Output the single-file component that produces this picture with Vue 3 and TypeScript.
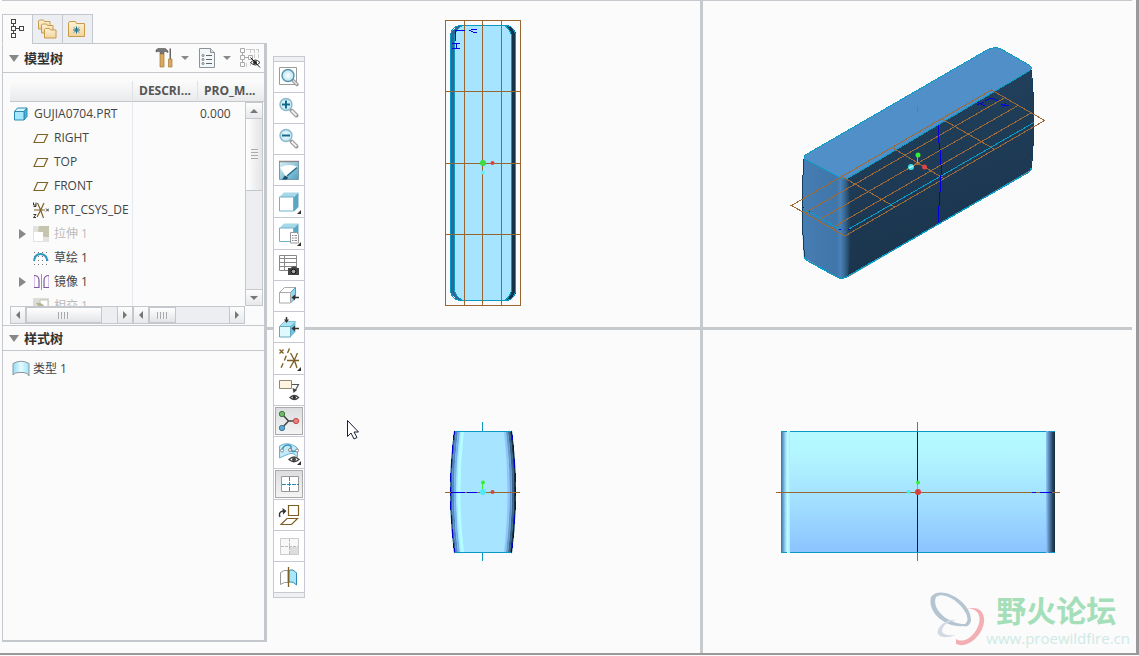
<script setup lang="ts">
interface TreeRow {
  name: string
  icon: 'part' | 'plane' | 'csys' | 'extrude' | 'sketch' | 'mirror' | 'intersect'
  root?: boolean
  expandable?: boolean
  muted?: boolean
  value?: string
}

const rows: TreeRow[] = [
  { name: 'GUJIA0704.PRT', icon: 'part', root: true, value: '0.000' },
  { name: 'RIGHT', icon: 'plane' },
  { name: 'TOP', icon: 'plane' },
  { name: 'FRONT', icon: 'plane' },
  { name: 'PRT_CSYS_DE', icon: 'csys' },
  { name: '拉伸 1', icon: 'extrude', expandable: true, muted: true },
  { name: '草绘 1', icon: 'sketch' },
  { name: '镜像 1', icon: 'mirror', expandable: true },
  { name: '相交 1', icon: 'intersect', muted: true },
]
</script>

<template>
  <div class="app">
    <aside class="side">
      <nav class="tabs">
        <button class="tab on" aria-label="模型树">
          <svg width="20" height="22" viewBox="0 0 20 22" class="crisp"><path d="M3.500 1.500h4v4h-4zM3.500 8.500h4v4h-4zM3.500 15.500h4v4h-4zM11.500 8.500h4v4h-4zM5.500 5.500v3M5.500 12.500v3M7.500 10.500h4" fill="none" stroke="#444" /></svg>
        </button>
        <button class="tab" aria-label="文件夹浏览器">
          <svg width="22" height="22" viewBox="0 0 22 22">
            <g fill="url(#fold)" stroke="#c79a4c">
              <path d="M1.500 11V3l1-1h4l1 1.500h5.500V11z" />
              <path d="M4.500 15V7l1-1h4l1 1.500h5.500V15z" />
              <path d="M7.500 20v-8.500l1-1h4l1 1.500h5.500V20z" />
            </g>
          </svg>
        </button>
        <button class="tab" aria-label="收藏夹">
          <svg width="22" height="22" viewBox="0 0 22 22">
            <path d="M1.500 18.500V5l1-1.500h6l1 2h8v13z" fill="url(#fold)" stroke="#c79a4c" />
            <path d="M9.500 8.500v7M6 12h7M7 9.500l5 5M12 9.500l-5 5" stroke="#1b6d92" />
          </svg>
        </button>
      </nav>

      <div class="panel">
        <header class="head">
          <i class="caret"></i>
          <h2>模型树</h2>
          <div class="tools">
            <button class="tool" aria-label="设置">
              <svg width="20" height="22" viewBox="0 0 20 22">
                <path d="M1 5V3l2-1.500h7.500L13 4v1.500l-2.500-1H9V7H5V4.500H3z" fill="#777" stroke="#555" stroke-width=".6" />
                <path d="M5 7h4v13H5z" fill="#d9a962" stroke="#a87832" stroke-width=".7" />
                <path d="M14.500 1.500h1.500V12h-1.500z" fill="#666" />
                <path d="M13.500 12h3.500v8h-3.500z" fill="#d9a962" stroke="#a87832" stroke-width=".7" />
              </svg>
              <i class="drop"></i>
            </button>
            <button class="tool" aria-label="显示">
              <svg width="20" height="22" viewBox="0 0 20 22">
                <path d="M2.500 1.500h11l4 4v15h-15z" fill="#f2f7fa" stroke="#8b9299" />
                <path d="M13.500 1.500v4h4" fill="#ddd" stroke="#8b9299" />
                <path d="M9 8.500h6M9 12.500h6M9 16.500h6" stroke="#666" />
                <g fill="none" stroke="#777"><circle cx="6" cy="8.500" r="1" /><circle cx="6" cy="12.500" r="1" /><circle cx="6" cy="16.500" r="1" /></g>
              </svg>
              <i class="drop"></i>
            </button>
            <button class="tool" aria-label="层显示">
              <svg width="22" height="22" viewBox="0 0 22 22">
                <path d="M1.500 1.500h4v4h-4zM1.500 8.500h4v4h-4zM1.500 15.500h4v4h-4zM9.500 8.500h4v4h-4zM3.500 5.500v3M3.500 12.500v3M5.500 10.500h4" fill="none" stroke="#aaa" />
                <path d="M7 2.500h12M11.500 2v5M15.500 2v10M19.500 2v10M7.500 16v4M11.500 15v5" fill="none" stroke="#ccc" stroke-dasharray="4 1" />
                <path d="M11.500 15.500q5-5 9.500 0q-4.500 5-9.500 0z" fill="#fff" stroke="#333" />
                <circle cx="16" cy="15.500" r="2" fill="#333" />
                <path d="M11.500 10.500l9.500 10" stroke="#111" />
              </svg>
            </button>
          </div>
        </header>

        <div class="tree">
          <div class="clip">
            <table>
              <colgroup><col class="c1" /><col class="c2" /><col /></colgroup>
              <thead>
                <tr><th></th><th>DESCRI...</th><th>PRO_M...</th></tr>
              </thead>
              <tbody>
                <tr v-for="row in rows" :key="row.name">
                  <td>
                    <div class="item" :class="{ root: row.root, muted: row.muted }">
                      <button v-if="row.expandable" class="twist" :aria-label="'展开 ' + row.name"></button>
                      <span v-else-if="!row.root" class="twist-gap"></span>
                      <svg width="16" height="16" viewBox="0 0 16 16">
                        <template v-if="row.icon === 'part'">
                          <path d="M1.500 5.500l3-3.500h9.500l-3 3.500z" fill="#d9f6fd" stroke="#2b8bb4" />
                          <path d="M11 5.500L14 2v8.500L11 14z" fill="#4cb4dd" stroke="#2b8bb4" />
                          <path d="M1.500 5.500H11V14H1.500z" fill="#a6e7fb" stroke="#2b8bb4" />
                        </template>
                        <path v-else-if="row.icon === 'plane'" d="M1 12.500L4.500 4.500H14.500L11 12.500z" fill="none" stroke="#7d6227" stroke-width="1.200" />
                        <template v-else-if="row.icon === 'csys'">
                          <path d="M1 8h11M4.500 1q3 6 6 15M11 1q-3.500 8-7 14" fill="none" stroke="#7d6227" stroke-width="1.200" />
                          <path d="M.5.500v2.500h2.500V.5M3 3v1.500H.5M.5 12.500h2.500l-2.500 3h2.500M13 6.500l3 3M16 6.500l-3 3" fill="none" stroke="#333" />
                        </template>
                        <template v-else-if="row.icon === 'extrude'">
                          <path d="M0 0h16v16H0z" fill="#e2e2df" />
                          <path d="M6 0h10v11h-5L5 5z" fill="#c6c4ae" />
                          <path d="M1 6h9v9H1z" fill="#fff" />
                        </template>
                        <template v-else-if="row.icon === 'sketch'">
                          <path d="M1 2.500h14M1 6.500h14M1 10.500h14M1 14.500h14" stroke="#777" stroke-dasharray="1 3" />
                          <path d="M1 11q1-7 6.500-7T14.500 11" fill="none" stroke="#2f97be" stroke-width="2" />
                        </template>
                        <template v-else-if="row.icon === 'mirror'">
                          <path d="M1.500 2v12M15.500 2v12" stroke="#d4c4e6" />
                          <path d="M1 1.500q5 0 5 5v7H1M16 1.500q-5 0-5 5v7h5" fill="none" stroke="#81599f" stroke-width="1.200" />
                          <path d="M8.500 0v16" stroke="#999" />
                        </template>
                        <template v-else>
                          <path d="M0 0h16v16H0z" fill="#dcdcd8" />
                          <path d="M7 2h8v12H7z" fill="#fff" stroke="#c6c4ae" />
                          <path d="M3 5q7-1 9 5H7z" fill="#b8b596" />
                        </template>
                      </svg>
                      <span>{{ row.name }}</span>
                    </div>
                  </td>
                  <td></td>
                  <td class="val">{{ row.value }}</td>
                </tr>
              </tbody>
            </table>
          </div>
          <div class="vbar">
            <button class="sb up" aria-label="向上滚动"></button>
            <div class="vthumb"><i></i></div>
            <button class="sb down" aria-label="向下滚动"></button>
          </div>
          <div class="hbars">
            <div class="hbar first">
              <button class="sb left" aria-label="名称列向左"></button>
              <div class="hthumb long"><i></i></div>
              <button class="sb right" aria-label="名称列向右"></button>
            </div>
            <div class="hbar">
              <button class="sb left" aria-label="数据列向左"></button>
              <div class="hthumb"><i></i></div>
              <button class="sb right" aria-label="数据列向右"></button>
            </div>
          </div>
        </div>

        <header class="head second">
          <i class="caret"></i>
          <h2>样式树</h2>
        </header>
        <div class="style-item">
          <svg width="18" height="18" viewBox="0 0 18 18">
            <path d="M1 3.500q8-4.500 16 0V16q-1-3-5-3.500H6Q3 12.500 1 15z" fill="url(#sheet)" stroke="#8f979d" />
          </svg>
          <span>类型 1</span>
        </div>
      </div>
    </aside>

    <main class="views">
      <svg viewBox="267 1 433 326" class="pane">
        <g class="crisp">
          <rect x="451" y="26" width="65" height="274" rx="10" fill="#2f6797" />
          <path d="M483 26h23q10 0 10 10v254q0 10-10 10h-23z" fill="#143349" />
          <path d="M454.500 38q0-8 8-12.500h42q7 4.500 7 12.500v250q0 8-7 12.500h-42q-8-4.500-8-12.500z" fill="#a6e4ff" stroke="#0a98c4" />
          <rect x="450.500" y="25.500" width="65" height="275" rx="10" fill="none" stroke="#0a98c4" />
          <path d="M445.500 20.500h75v285h-75zM464.500 20v285M482.500 20v285M501.500 20v285M445 91.500h75M445 163.500h75M445 234.500h75" fill="none" stroke="#996632" />
          <path d="M455.500 41V30.500h9M452 43.500h8M452 48.500h8M456.500 43v5M469 30.500h2M471 29.500h6M471 31.500h2M473 32.500h4" fill="none" stroke="#0000e0" />
        </g>
        <circle cx="483" cy="163" r="3" fill="#3bdc3b" /><circle cx="492.500" cy="163" r="2" fill="#de4040" /><circle cx="483" cy="172.500" r="2" fill="#5ff2f8" />
      </svg>

      <svg viewBox="703 1 429 326" class="pane">
        <path d="M847 177L1031 68Q1037 120 1031 170L848 277z" fill="url(#dark)" />
        <path d="M804 157Q800 208 804 258L837 277Q843 280 848 276Q854 225 848 176z" fill="url(#endcap)" />
        <path d="M804 157Q804 155 807 154L987 50Q995 46 1001 49L1029 65Q1034 68 1029 71L850 177Q845 180 839 177L806 160Q804 159 804 157z" fill="#518fc8" />
        <g fill="none" stroke="#0a9dc6" class="crisp">
          <path d="M804 157Q804 155 807 154L987 50Q995 46 1001 49L1029 65Q1034 68 1029 71L850 177Q845 180 839 177L806 160Q804 159 804 157z" />
          <path d="M804.500 256Q804 259 808 261L837 277Q843 280 848 276L1029 172Q1032 170 1031 168" stroke-width="1.300" />
        </g>
        <path d="M804 159Q800 208 804.500 257M1031.500 70Q1036 120 1031.500 168" fill="none" stroke="#153b5a" class="crisp" />
        <g fill="none" class="crisp">
          <path d="M791.500 205.500L991.500 90L1044.500 120.500L845 236zM805 213L1005 97.500M818 220.500L1018 105.500M832 228L1031 113M842 176.500L895 207M892 147.500L943 178M942 119L994 149" stroke="#a06a36" />
          <path d="M848 229.500L1034 122.500M806 210L840 229.500M917.500 106v7" stroke="#0a9dc6" />
          <path d="M938.500 125v18M939.500 143v7M940.500 150v15M941.500 165v10M940.500 175v17M939.500 192v14M938.500 206v17" stroke="#0000e0" stroke-width="1.200" />
          <path d="M977 102l8 4M977 105l7-3M985 101l5-2.500h3l5 2.500M1001 104l4 2 4-1M1006 103l-4 4M802.500 207.500h1M808.500 211h1M839 229.500h2M848 229.500h2" stroke="#0000e0" />
          <path d="M917.500 156v7" stroke="#34ef34" />
          <path d="M915 163.500h5" stroke="#9b6838" stroke-width="2" />
        </g>
        <circle cx="918" cy="155" r="2.500" fill="#34ef34" /><circle cx="924.500" cy="167" r="2.500" fill="#df4343" /><circle cx="911" cy="167" r="3" fill="#43dfe2" /><path d="M909 168l4-2" stroke="#eff" />
      </svg>

      <svg viewBox="267 330 433 323" class="pane">
        <path d="M454 431h58Q520 492 512 553H454Q446 492 454 431z" fill="#a6e4ff" />
        <g fill="none" class="slices">
          <path d="M455 431Q447 492 455 553" stroke="#315f92" />
          <path d="M457 431Q449 492 457 553" stroke="#5188c0" />
          <path d="M459 431Q451 492 459 553" stroke="#78b3ee" />
          <path d="M461.500 431Q454.500 492 461.500 553" stroke="#a8e4ff" />
          <path d="M462.500 431Q455.500 492 462.500 553" stroke="#b3fcff" />
          <path d="M505 431Q512 492 505 553" stroke="#8cc6fa" />
          <path d="M507 431Q514.500 492 507 553" stroke="#6699cb" />
          <path d="M509 431Q517 492 509 553" stroke="#3a658e" />
          <path d="M511 431Q519 492 511 553" stroke="#1a3047" />
        </g>
        <g fill="none" class="crisp">
          <path d="M454.500 431Q446.500 492 454.500 552M511.500 431Q519.500 492 511.500 552" stroke="#0000cc" stroke-dasharray="9 5" />
          <path d="M455 431.500h56M455 552.500h56M482.500 422v9M482.500 553v8" stroke="#0a98c4" />
          <path d="M445 492.500h75" stroke="#996632" />
          <path d="M451 492.500h14M467 492.500h10" stroke="#0000e0" />
          <path d="M482.500 483v8" stroke="#34ef34" />
        </g>
        <circle cx="483" cy="482.500" r="2" fill="#34ef34" /><circle cx="492.500" cy="492" r="2" fill="#c84b42" /><circle cx="483" cy="492" r="3" fill="#4feaf1" />
        <path d="M347.500 420.500v16l3.500-3.500 3 6 3-1.500-3-5.500h4.500z" fill="#fff" stroke="#1b1f38" />
      </svg>

      <svg viewBox="703 330 429 323" class="pane">
        <g class="crisp">
          <rect x="781" y="431" width="274" height="122" fill="url(#front)" />
          <rect x="781" y="431" width="9" height="122" fill="url(#edgeL)" />
          <rect x="1046" y="431" width="9" height="122" fill="url(#edgeR)" />
          <g fill="none">
            <path d="M781 431.500h6M790 431.500h256M1049 431.500h6M781 552.500h6M790 552.500h256M1049 552.500h6M917.500 422v9M917.500 553v8" stroke="#0a98c4" />
            <path d="M917.500 432v120" stroke="#0000dc" />
            <path d="M776 492.500h284" stroke="#996632" />
            <path d="M1032 492.500h4M1040 492.500h12" stroke="#0000e0" />
            <path d="M917.500 484v7" stroke="#34ef34" />
          </g>
        </g>
        <circle cx="918" cy="482.500" r="2" fill="#34ef34" /><circle cx="918" cy="492" r="3" fill="#dc3f3c" /><circle cx="908.500" cy="492" r="2" fill="#4feaf1" />
      </svg>
    </main>

    <div class="bar" role="toolbar" aria-label="视图工具栏">
      <button aria-label="重新调整">
        <svg viewBox="0 0 30 30"><path d="M5.500 5.500h17v17h-17z" fill="#fff" stroke="#9a9a9a" /><path d="M19 18.500l4 4" stroke="#999" stroke-width="3.500" stroke-linecap="round" /><path d="M19 18.500l4 4" stroke="#e4e4e4" stroke-width="1.500" /><circle cx="14" cy="13.500" r="6" fill="url(#lens)" stroke="#5a93ab" stroke-width="1.400" /></svg>
      </button>
      <button aria-label="放大">
        <svg viewBox="0 0 30 30"><path d="M17.500 17.500l5 5" stroke="#999" stroke-width="4" stroke-linecap="round" /><path d="M17.500 17.500l5 5" stroke="#eee" stroke-width="2" /><circle cx="12" cy="11.500" r="6" fill="url(#lens)" stroke="#8bb9c9" stroke-width="1.400" /><path d="M12 7.500v8M8 11.500h8" stroke="#14698d" stroke-width="2" /></svg>
      </button>
      <button aria-label="缩小">
        <svg viewBox="0 0 30 30"><path d="M17.500 17.500l5 5" stroke="#999" stroke-width="4" stroke-linecap="round" /><path d="M17.500 17.500l5 5" stroke="#eee" stroke-width="2" /><circle cx="12" cy="11.500" r="6" fill="url(#lens)" stroke="#8bb9c9" stroke-width="1.400" /><path d="M8 11.500h8" stroke="#14698d" stroke-width="2" /></svg>
      </button>
      <button aria-label="重画">
        <svg viewBox="0 0 30 30"><path d="M5.500 6.500h19v18h-19z" fill="url(#paint)" stroke="#799aac" /><path d="M5 6.500h20" stroke="#888" stroke-width="1.500" /><path d="M6 12.500Q15 8 24 12L12 22z" fill="#fff" /><path d="M23 12.500L13 21" stroke="#226c8c" stroke-width="1.500" /><path d="M8 24.500l3-4 3 2-1 2z" fill="#14506e" /></svg>
      </button>
      <button class="more" aria-label="显示样式">
        <svg viewBox="0 0 30 30"><path d="M5.500 10l4.500-4.500h14.500L20 10z" fill="#a5d8e8" /><path d="M20 10l4.500-4.500V20L20 24.500z" fill="#5ba6c2" /><path d="M5.500 10H19.500v14H5.500z" fill="#fff" stroke="#6fb2cb" /></svg>
      </button>
      <button class="more" aria-label="已保存方向">
        <svg viewBox="0 0 30 30"><path d="M5.500 9L10 4.500h14.500L20 9z" fill="#a5d8e8" /><path d="M20 9l4.500-4.500V18L20 21z" fill="#5ba6c2" /><path d="M5.500 9H19.500v13.500H5.500z" fill="#fff" stroke="#6fb2cb" /><path d="M16.500 13.500h6l2 2V24h-8z" fill="#fff" stroke="#999" /><path d="M18 16.500h1.500M20.500 16.500h2.500M18 19h1.500M20.500 19h2.500M18 21.500h1.500M20.500 21.500h2.500" stroke="#888" /></svg>
      </button>
      <button aria-label="视图管理器">
        <svg viewBox="0 0 30 30"><path d="M5.500 5.500h17v15h-17zM10.500 5.500v15M5.500 8.500h17M5.500 12.500h17M5.500 16.500h17" fill="#fff" stroke="#888" /><path d="M14 18h3l1-1.500h4l1 1.500h2v7H14z" fill="#444" /><circle cx="19.500" cy="21.500" r="2.300" fill="#aaa" stroke="#111" /></svg>
      </button>
      <button aria-label="裁剪右侧">
        <svg viewBox="0 0 30 30"><path d="M5.500 11.500l5-5h11l-5 5z" fill="#fff" stroke="#aaa" /><path d="M16.500 11.500l5-5V17l-5 5z" fill="#8fd9ef" stroke="#4a9fbc" /><path d="M5.500 11.500h11V22h-11z" fill="#fff" stroke="#aaa" /><path d="M25 16.500h-5" stroke="#333" stroke-width="1.500" /><path d="M17.500 16.500l3.500-3v6z" fill="#333" /></svg>
      </button>
      <button aria-label="裁剪上侧">
        <svg viewBox="0 0 30 30"><path d="M5.500 14.500l5-5h11l-5 5z" fill="#a9e4f5" stroke="#80bfd3" /><path d="M16.500 14.500l5-5V20l-5 5z" fill="#6fc2dd" /><path d="M5.500 14.500h11V25h-11z" fill="#e0f9ff" stroke="#64a9bf" /><path d="M25 16.500h-5M12.500 5v3" stroke="#333" stroke-width="1.500" /><path d="M17.500 16.500l3.500-3v6zM10 7.500h5l-2.500 3.500z" fill="#333" /></svg>
      </button>
      <button class="more" aria-label="基准显示过滤器">
        <svg viewBox="0 0 30 30"><path d="M5.500 5.500l4 4M9.500 5.500l-4 4M13 16.500h12M16.500 9q4 6 6.500 15M23.500 9q-3 8-7.500 15" fill="none" stroke="#7d5f23" stroke-width="1.300" /><path d="M15.500 4.500L7 24" stroke="#7d5f23" stroke-width="1.400" stroke-dasharray="5 3" /></svg>
      </button>
      <button aria-label="注释显示">
        <svg viewBox="0 0 30 30"><path d="M5.500 5.500h12v8h-12z" fill="#fff4df" stroke="#8f8878" /><path d="M18 9.500h6.500L21 16" fill="none" stroke="#555" stroke-width="1.200" /><path d="M18.500 13l4.500 2-3.500 3z" fill="#444" /><path d="M16 22.500q4.500-4 8.500 0q-4 4-8.500 0z" fill="#fff" stroke="#444" stroke-width="1.300" /><circle cx="20.300" cy="22.500" r="1.700" fill="#333" /></svg>
      </button>
      <button class="on" aria-label="旋转中心">
        <svg viewBox="0 0 30 30"><path d="M8 8l6.500 7L8 22M14.500 15H22" fill="none" stroke="#444" stroke-width="1.500" /><circle cx="8" cy="8" r="2.700" fill="#71b96b" stroke="#43793f" /><circle cx="22" cy="15" r="2.700" fill="#ed7c7c" stroke="#c75151" /><circle cx="8" cy="22" r="2.700" fill="#63a7ce" stroke="#3a7ca3" /></svg>
      </button>
      <button class="more" aria-label="样式显示">
        <svg viewBox="0 0 30 30"><path d="M5.500 8q7-4 13-1 5 2 5 4v8q-4-5-9-3t-9 4z" fill="#c1eafb" stroke="#68b3d0" /><path d="M8 13q1-6 6-6 4 0 3 5 2 3 7 0" fill="none" stroke="#3b91b5" stroke-width="1.500" /><g fill="#fff" stroke="#888"><circle cx="8" cy="12.500" r="1.500" /><circle cx="16" cy="12" r="1.500" /><circle cx="23" cy="12.500" r="1.500" /></g><path d="M15 21.500q5-5 10 0q-5 4.500-10 0z" fill="#fff" stroke="#444" stroke-width="1.400" /><circle cx="20" cy="21.500" r="2" fill="#444" /></svg>
      </button>
      <button class="on" aria-label="四视图">
        <svg viewBox="0 0 30 30"><path d="M7.500 7.500h17v15h-17z" fill="#fff" stroke="#999" /><path d="M15.500 8v15M8 15.500h17" stroke="#2789b4" stroke-dasharray="4 1" /></svg>
      </button>
      <button aria-label="活动平面方向">
        <svg viewBox="0 0 30 30"><path d="M14.500 5.500h10v10h-10zM7 24.500l6-6h10.500l-6 6z" fill="none" stroke="#7d5f23" stroke-width="1.200" /><path d="M6 17q-2-5 3-6" fill="none" stroke="#333" stroke-width="1.400" /><path d="M8.500 8l4 3-3.500 3.500z" fill="#333" /></svg>
      </button>
      <button aria-label="下一个视图">
        <svg viewBox="0 0 30 30"><path d="M6.500 7.500h18v16h-18z" fill="#f8f8f8" stroke="#ccc" /><path d="M16 16h8v7h-8z" fill="#ddd" /><path d="M15.500 8v15M7 15.500h17" stroke="#bbb" stroke-dasharray="3 1" /></svg>
      </button>
      <button aria-label="镜像曲面">
        <svg viewBox="0 0 30 30"><path d="M14 8.500q-4-1-7.500 2v12q4-3 7.500-2z" fill="#fff" stroke="#999" /><path d="M15 8.500q4-2 7.500 2.500v12q-3-4-7.500-3z" fill="#a8e6fa" stroke="#348bb0" /><path d="M14.500 5v20" stroke="#7d5f23" stroke-width="1.300" /></svg>
      </button>
    </div>

    <div class="mark">
      <svg width="58" height="58" viewBox="0 0 58 58">
        <path fill-rule="evenodd" d="M3 7C12-6 44 11 43 31Q41 38 35 36C17 38-1 22 3 7zM8 7C3 19 20 34 37 34C48 26 20-2 8 7z" fill="#b4c4d0" />
        <path d="M39 19C45 17 50 18 53 21C64 34 44 61 28 54L28 49C41 57 58 32 49 22Q45 18 39 19z" fill="#f3b0b4" />
        <path d="M29 30C20 28 8 36 10 44Q14 50 28 45Q14 46 14 41Q15 32 29 30z" fill="#d3dae3" />
      </svg>
      <div class="words"><strong>野火论坛</strong><span>www.proewildfire.cn</span></div>
    </div>

    <svg class="defs" width="0" height="0" aria-hidden="true">
      <defs>
        <linearGradient id="fold" x2="0" y2="1"><stop stop-color="#fdf3d6" /><stop offset="1" stop-color="#f0d49c" /></linearGradient>
        <linearGradient id="sheet"><stop stop-color="#8fdcf7" /><stop offset=".5" stop-color="#e6fbff" /><stop offset="1" stop-color="#9be5fb" /></linearGradient>
        <linearGradient id="paint" x2="1" y2="1"><stop stop-color="#d9f1fa" /><stop offset="1" stop-color="#4d9fc0" /></linearGradient>
        <radialGradient id="lens"><stop stop-color="#fff" /><stop offset="1" stop-color="#b5e4f3" /></radialGradient>
        <linearGradient id="dark" x2="0.200" y2="1"><stop stop-color="#23425f" /><stop offset="1" stop-color="#1a344c" /></linearGradient>
        <linearGradient id="endcap" gradientUnits="userSpaceOnUse" x1="802" y1="0" x2="850" y2="0"><stop stop-color="#467db3" /><stop offset=".72" stop-color="#4076a9" /><stop offset=".8" stop-color="#4a82b8" /><stop offset=".88" stop-color="#3b6b98" /><stop offset="1" stop-color="#1e3c58" /></linearGradient>
        <linearGradient id="front" x2="0" y2="1"><stop stop-color="#b4fbff" /><stop offset=".2" stop-color="#b2f5ff" /><stop offset=".55" stop-color="#a3e1ff" /><stop offset="1" stop-color="#8bc3ff" /></linearGradient>
        <linearGradient id="edgeL"><stop stop-color="#3370a5" /><stop offset=".5" stop-color="#9cd9f8" /><stop offset=".7" stop-color="#bbfdff" /><stop offset="1" stop-color="#acebff" /></linearGradient>
        <linearGradient id="edgeR"><stop stop-color="#94c9ff" /><stop offset=".3" stop-color="#5e8fbe" /><stop offset=".7" stop-color="#294a69" /><stop offset="1" stop-color="#142838" /></linearGradient>
      </defs>
    </svg>
  </div>
</template>

<style>
body { margin: 0; background: #fbfbfb; }
</style>

<style scoped>
* { box-sizing: border-box; }
.app {
  position: relative;
  display: flex;
  height: calc(100vh - 1px);
  border-right: 3px solid #999;
  border-bottom: 2px solid #999;
  padding: 0 4px 0 2px;
  background: #fbfbfb;
  color: #444;
  font: 12px/24px "Open Sans", "Noto Sans CJK SC", sans-serif;
  overflow: hidden;
}
button { margin: 0; padding: 0; border: 0; background: none; font: inherit; color: inherit; }
svg { display: block; flex: none; }
.crisp { shape-rendering: crispEdges; }

.side { display: flex; flex-direction: column; flex: none; width: 265px; padding: 13px 0 11px; border-top: 1px solid #c5c8cc; }
.tabs { position: relative; z-index: 1; display: flex; height: 30px; margin-bottom: -1px; }
.tab { display: flex; align-items: center; justify-content: center; width: 31px; height: 30px; margin-right: -1px; border: 1px solid #c4c8cd; background: #edeef1; }
.tab.on { border-bottom-color: #fbfbfb; background: #fbfbfb; }
.panel { flex: 1; border: 1px solid #c4c8cd; border-right-width: 3px; border-bottom-width: 2px; min-height: 0; }
.head { display: flex; align-items: center; height: 29px; padding-left: 6px; border-bottom: 1px solid #c4c8cd; }
.head.second { height: 26px; border-top: 1px solid #c4c8cd; }
.head h2 { margin: 0 0 0 5px; font-size: 13px; font-weight: 700; color: #333; }
.caret { border: 5px solid transparent; border-top: 7px solid #888; border-bottom: 0; }
.tools { display: flex; flex: 1; justify-content: flex-end; gap: 8px; padding-right: 3px; }
.tool { display: flex; align-items: center; gap: 6px; }
.drop { border: 4px solid transparent; border-top: 4px solid #888; border-bottom: 0; }

.tree { position: relative; margin: 8px 0 1px 7px; }
.clip { height: 225px; overflow: hidden; }
table { width: 100%; table-layout: fixed; border-collapse: separate; border-spacing: 0; }
.c1 { width: 123px; }
.c2 { width: 65px; }
th { height: 21px; padding: 0 0 0 6px; border-bottom: 1px solid #c4c8cd; border-right: 1px solid #dfe3e8; background: linear-gradient(#fbfbfb, #e9eaec); line-height: 20px; text-align: left; font-weight: 700; color: #555; white-space: nowrap; }
th:last-child { border-right: 0; }
td { height: 24px; padding: 0; overflow: hidden; }
td:first-child { border-right: 1px solid #e4e9ef; }
.val { padding-left: 2px; }
.item { display: flex; align-items: center; height: 24px; padding-left: 9px; white-space: nowrap; overflow: hidden; }
.item.root { padding-left: 3px; }
.item span:last-child { margin-left: 5px; }
.item.muted { color: #bbb; }
.twist, .twist-gap { flex: none; width: 7px; margin-right: 7px; }
.twist { height: 0; border: 5px solid transparent; border-left: 7px solid #888; border-right: 0; }

.sb { position: relative; flex: none; display: flex; align-items: center; justify-content: center; width: 17px; height: 17px; border: 1px solid #c4c8cd; background: linear-gradient(#fdfdfd, #e6e8eb); }
.sb::after { content: ""; border: 4px solid transparent; }
.up::after { border-bottom-color: #777; border-top: 0; }
.down::after { border-top-color: #777; border-bottom: 0; }
.left::after { border-right-color: #777; border-left: 0; }
.right::after { border-left-color: #777; border-right: 0; }
.vbar { position: absolute; top: 21px; right: 1px; display: flex; flex-direction: column; width: 18px; height: 204px; border: solid #c4c8cd; border-width: 0 1px; background: #edeef1; }
.vbar .sb { width: 16px; border-width: 1px 0; }
.vbar .down { margin-top: auto; }
.vthumb { display: flex; align-items: center; justify-content: center; height: 72px; border-bottom: 1px solid #c4c8cd; background: linear-gradient(90deg, #fff, #e2e4e7); }
.vthumb i { width: 7px; height: 12px; background: repeating-linear-gradient(#aaa 0 1px, #f2f2f2 1px 3px); }
.hbars { display: flex; width: 235px; height: 18px; }
.hbar { display: flex; flex: 1; border: solid #c4c8cd; border-width: 1px 0; background: #edeef1; }
.hbar.first { flex: none; width: 123px; }
.hbar .sb { width: 16px; height: 16px; }
.hbar .sb { border-width: 0 1px; }
.hbar .right { margin-left: auto; }
.hthumb { display: flex; align-items: center; justify-content: center; width: 27px; border: 1px solid #c4c8cd; background: linear-gradient(#fff, #e2e4e7); }
.hthumb.long { width: 76px; }
.hthumb i { width: 12px; height: 7px; background: repeating-linear-gradient(90deg, #aaa 0 1px, #f2f2f2 1px 3px); }
.style-item { display: flex; align-items: center; gap: 3px; padding: 6px 9px; }

.views { flex: 1; display: grid; grid-template: 326fr 323fr / 433fr 429fr; gap: 3px; border-top: 1px solid #c5c8cc; background: #c6cacc; min-width: 0; }
.pane { width: 100%; height: 100%; min-height: 0; background: #fbfbfb; }
.slices path { stroke-width: 2px; }
.slices path:nth-child(4), .slices path:nth-child(5) { stroke-width: 3px; }

.bar { position: absolute; left: 273px; top: 56px; width: 32px; padding: 4px 0; border: 1px solid #c6cad0; background: #eef0f2; }
.bar button { position: relative; display: block; width: 30px; height: 31px; border-top: 1px solid #c6cad0; background: #fff; }
.bar button:last-child { height: 32px; border-bottom: 1px solid #c6cad0; }
.bar .more { height: 32px; }
.bar .more::after { content: ""; position: absolute; right: 3px; bottom: 3px; border: 2px solid #333; border-top-color: transparent; border-left-color: transparent; }
.bar .on { background: linear-gradient(#dadbdd, #f6f6f6); box-shadow: inset 0 0 0 1px #fff, inset 0 0 0 2px #aaa; }
.bar svg { width: 30px; height: 30px; }

.mark { position: absolute; right: 6px; bottom: 5px; display: flex; align-items: flex-end; }
.words { display: flex; flex-direction: column; white-space: nowrap; }
.words strong { padding-left: 10px; font-size: 30px; line-height: 34px; color: #a4dfb9; }
.words span { font-size: 15px; line-height: 20px; color: #cdeae6; }
.defs { position: absolute; }
</style>
